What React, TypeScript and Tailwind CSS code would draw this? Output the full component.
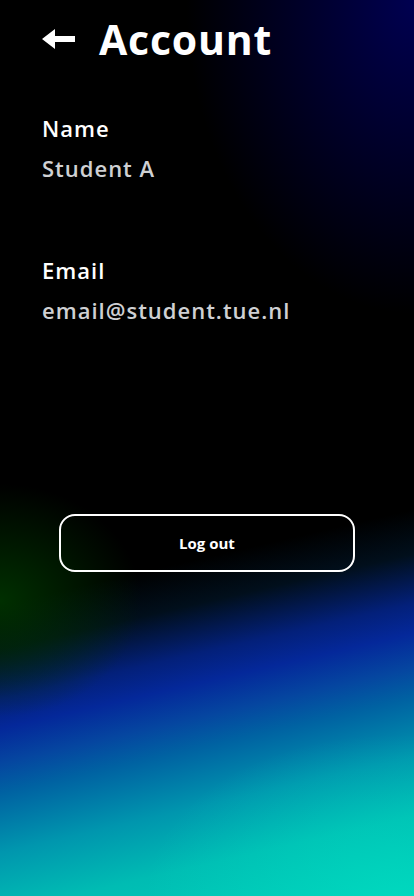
export default function App() {
  return (
    <div className="relative min-h-[896px] w-full overflow-hidden bg-black bg-[image:radial-gradient(ellipse_55%_35%_at_100%_0%,rgba(0,0,85,0.95),transparent),radial-gradient(ellipse_34%_13%_at_0%_67%,rgba(0,50,0,0.95),transparent),radial-gradient(ellipse_60%_18%_at_95%_100%,rgba(0,225,195,0.5),transparent),linear-gradient(167deg,#000_61%,#010f1c_65.5%,#03207a_70.5%,#04289a_73.5%,#0546a0_77%,#0062a2_80%,#0096ae_86%,#00bcb3_92%,#00cfb9_100%)] font-['Open_Sans',sans-serif] text-white">
      {/* Header */}
      <div className="flex items-center gap-6 px-[42px] pt-[12px]">
        <svg width="33" height="20" viewBox="0 0 33 20" className="shrink-0">
          <path d="M0 10 L13 0 L13 7 L33 7 L33 13 L13 13 L13 20 Z" fill="white" />
        </svg>
        <h1 className="text-[41px] font-bold leading-[54px] tracking-[0.8px]">Account</h1>
      </div>

      {/* Fields */}
      <div className="mt-[48px] px-[42px]">
        <div className="text-[22px] font-semibold leading-[28px] tracking-[1px]">Name</div>
        <div className="mt-[12px] text-[22px] font-semibold leading-[28px] tracking-[1px] text-[#cfd0d3]">Student A</div>
      </div>
      <div className="mt-[74px] px-[42px]">
        <div className="text-[22px] font-semibold leading-[28px] tracking-[1px]">Email</div>
        <div className="mt-[12px] text-[22px] font-semibold leading-[28px] tracking-[1px] text-[#cfd0d3]">email@student.tue.nl</div>
      </div>

      {/* Log out */}
      <div className="mt-[190px] px-[59px]">
        <button className="flex h-[58px] w-full items-center justify-center rounded-[16px] border-2 border-white font-['Open_Sans',sans-serif] text-[15px] font-bold">
          Log out
        </button>
      </div>
    </div>
  )
}
